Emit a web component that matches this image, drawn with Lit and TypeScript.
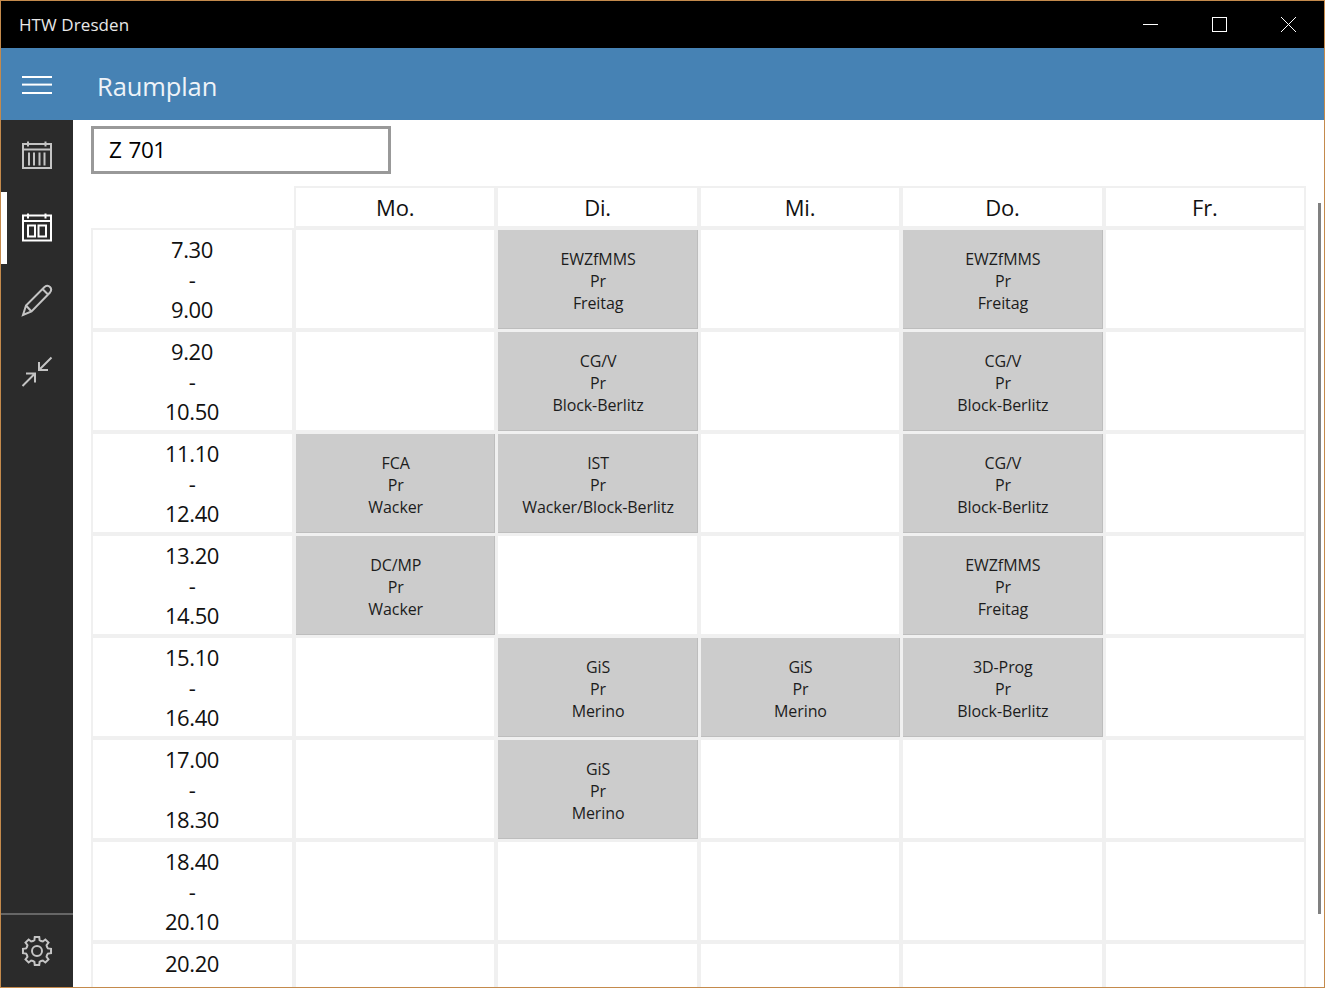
import { LitElement, html, css, svg } from "lit";
import { customElement } from "lit/decorators.js";

type Course = [string, string];
const LEHRE: Record<string, Course> = {
  e: ["EWZfMMS", "Freitag"],
  c: ["CG/V", "Block-Berlitz"],
  f: ["FCA", "Wacker"],
  i: ["IST", "Wacker/Block-Berlitz"],
  d: ["DC/MP", "Wacker"],
  g: ["GiS", "Merino"],
  p: ["3D-Prog", "Block-Berlitz"],
};
const DAYS = ["Mo.", "Di.", "Mi.", "Do.", "Fr."];
const ROWS: [string, string, string][] = [
  ["7.30", "9.00", " e e "],
  ["9.20", "10.50", " c c "],
  ["11.10", "12.40", "fi c "],
  ["13.20", "14.50", "d  e "],
  ["15.10", "16.40", " ggp "],
  ["17.00", "18.30", " g   "],
  ["18.40", "20.10", "     "],
  ["20.20", "", "     "],
];

function gearPath(cx: number, cy: number): string {
  const teeth = 8;
  const pts: string[] = [];
  for (let i = 0; i < teeth; i++) {
    const a = (i * 2 * Math.PI) / teeth - Math.PI / 2;
    const step = (2 * Math.PI) / teeth;
    const seq: [number, number][] = [
      [10.8, -0.5 * step],
      [11.2, -0.3 * step],
      [14.2, -0.2 * step],
      [14.2, 0.2 * step],
      [11.2, 0.3 * step],
    ];
    for (const [r, d] of seq) {
      pts.push(`${(cx + r * Math.cos(a + d)).toFixed(2)} ${(cy + r * Math.sin(a + d)).toFixed(2)}`);
    }
  }
  return "M" + pts.join("L") + "Z";
}

const icoWeek = svg`<path d="M23 144h28v24H23zM23 149.500h28M28 141.500v5M45.500 141.500v5M29 152.500v13M34 152.500v13M39.500 152.500v13M44.500 152.500v13"/>`;
const icoDay = svg`<path d="M23 215.500h28v25H23zM23 221h28M28 213.500v5M45.500 213.500v5M28 225.500h7v11h-7zM38.500 225.500h7.500v11h-7.500z"/>`;
const icoPen = svg`<path d="M23 315l3-9.500 18.500-18.500c2-1.500 4-1.500 5.500 0s1.500 3.500 0 5.500L31.500 311.500zM26 305.500l5.500 6M42.500 289l6 6"/>`;
const icoShrink = svg`<path d="M51.500 357.500L39 370M39 362v8h9M22.500 386L35 373.500M26 373.500h9v9"/>`;

@customElement("app-root")
export class AppRoot extends LitElement {
  static styles = css`
    :host {
      display: flex;
      flex-direction: column;
      box-sizing: border-box;
      width: 1325px;
      height: 988px;
      border: 1px solid #c48a4c;
      overflow: hidden;
      background: #fff;
      font-family: "Open Sans", "Noto Sans", sans-serif;
      color: #000;
    }
    .titlebar {
      height: 47px;
      flex: none;
      background: #000;
      color: #e8e8e8;
      display: flex;
      align-items: center;
      justify-content: space-between;
      padding-left: 18px;
      font-size: 17px;
      letter-spacing: 0.08px;
    }
    .winctl { display: flex; }
    .winctl svg { display: block; width: 207px; height: 47px; fill: none; stroke: #fff; stroke-width: 1; }
    .appbar {
      height: 72px;
      flex: none;
      background: #4682b4;
      color: #fff;
      display: flex;
      align-items: center;
    }
    .burger { width: 72px; display: flex; justify-content: center; margin-top: 2px; }
    .burger svg { display: block; width: 30px; height: 18px; fill: #fff; }
    .appbar h1 {
      margin: 4px 0 0 24px;
      font-size: 25.500px;
      font-weight: 400;
      letter-spacing: -0.1px;
      color: #eef3f8;
    }
    .body { flex: 1; display: flex; min-height: 0; }
    .nav {
      width: 72px;
      flex: none;
      background: #2b2b2b;
      display: flex;
      flex-direction: column;
    }
    .nav svg.icons {
      display: block;
      width: 72px;
      height: 72px;
      fill: none;
      stroke: #c4c4c4;
      stroke-width: 2;
    }
    .item { height: 72px; position: relative; }
    .item.active svg.icons { stroke: #fff; }
    .item.active::before {
      content: "";
      position: absolute;
      left: 0;
      top: 0;
      width: 6px;
      height: 72px;
      background: #fff;
    }
    .spacer { flex: 1; }
    .sep { height: 2px; background: #666; flex: none; }
    .main {
      flex: 1;
      min-width: 0;
      position: relative;
      overflow: hidden;
      padding: 6px 0 0 18px;
    }
    .search {
      box-sizing: border-box;
      width: 300px;
      height: 48px;
      border: 3px solid #999;
      display: flex;
      align-items: center;
      padding: 0 0 2px 15px;
      font-size: 22.500px;
      word-spacing: 1.5px;
      letter-spacing: -0.4px;
    }
    .grid {
      margin: 12px 0 0 0;
      display: grid;
      grid-template-columns: 203px repeat(5, 202.4px);
      grid-template-rows: 42px;
      grid-auto-rows: 102px;
    }
    .cell {
      box-sizing: border-box;
      border: 2px solid #f0f0f0;
      min-width: 0;
      display: flex;
    }
    .blank { border-color: transparent; }
    .day {
      align-items: center;
      justify-content: center;
      font-size: 22px;
      letter-spacing: -0.2px;
      color: #111;
    }
    .time {
      flex-direction: column;
      align-items: center;
      justify-content: flex-start;
      padding: 4px 1px 0 0;
      font-size: 22px;
      line-height: 30px;
      letter-spacing: -0.4px;
      color: #111;
    }
    .lesson {
      flex: 1;
      margin: 0 -1px -1px 0;
      background: #ccc;
      border-right: 1px solid #bdbdbd;
      border-bottom: 1px solid #bdbdbd;
      display: flex;
      flex-direction: column;
      align-items: center;
      justify-content: center;
      padding: 4px 0 0 1px;
      font-size: 16px;
      line-height: 22px;
      letter-spacing: -0.1px;
      color: #1c1c1c;
    }
    .scroll {
      position: absolute;
      right: 3px;
      top: 83px;
      width: 3px;
      height: 711px;
      background: #808080;
    }
  `;

  render() {
    return html`
      <div class="titlebar">
        <span>HTW Dresden</span>
        <div class="winctl">
          <svg viewBox="0 0 207 47">
            <path d="M26 23.500h15" />
            <rect x="95.500" y="16.500" width="14" height="14" />
            <path d="M164 16l15 15M179 16l-15 15" />
          </svg>
        </div>
      </div>
      <div class="appbar">
        <div class="burger">
          <svg viewBox="0 0 30 18"><rect y="0" width="30" height="2" /><rect y="7.600" width="30" height="2" /><rect y="16" width="30" height="2" /></svg>
        </div>
        <h1>Raumplan</h1>
      </div>
      <div class="body">
        <div class="nav">
          ${this.navItem(icoWeek, 120)}
          ${this.navItem(icoDay, 192, true)}
          ${this.navItem(icoPen, 264)}
          ${this.navItem(icoShrink, 336)}
          <div class="spacer"></div>
          <div class="sep"></div>
          ${this.navItem(svg`<path d="${gearPath(37, 951)}" /><circle cx="37" cy="951" r="5" />`, 915)}
        </div>
        <div class="main">
          <div class="search">Z 701</div>
          <div class="grid">
            <div class="cell blank"></div>
            ${DAYS.map((d) => html`<div class="cell day">${d}</div>`)}
            ${ROWS.map(
              ([from, to, plan]) => html`
                <div class="cell time">
                  <span>${from}</span>
                  ${to ? html`<span>-</span><span>${to}</span>` : ""}
                </div>
                ${[...plan].map((k) => {
                  const c = LEHRE[k];
                  return html`<div class="cell">
                    ${c ? html`<div class="lesson"><span>${c[0]}</span><span>Pr</span><span>${c[1]}</span></div>` : ""}
                  </div>`;
                })}
              `,
            )}
          </div>
          <div class="scroll"></div>
        </div>
      </div>
    `;
  }

  private navItem(icon: unknown, top: number, active = false) {
    return html`<div class="item ${active ? "active" : ""}">
      <svg class="icons" viewBox="1 ${top} 72 72">${icon}</svg>
    </div>`;
  }
}
